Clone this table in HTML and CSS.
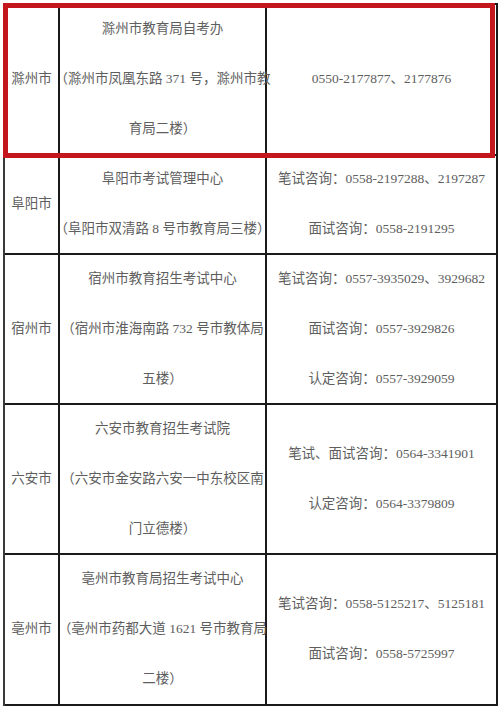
FILE: index.html
```html
<!DOCTYPE html>
<html lang="zh">
<head>
<meta charset="utf-8">
<title>考试咨询电话</title>
<link rel="stylesheet" href="styles.css">
</head>
<body>
<div class="sheet">
  <div class="grid">
    <div class="cell city"><div class="lines"><span>滁州市</span></div></div>
    <div class="cell"><div class="lines"><span>滁州市教育局自考办</span><span>（滁州市凤凰东路 371 号，滁州市教</span><span>育局二楼）</span></div></div>
    <div class="cell last"><div class="lines"><span>0550-2177877、2177876</span></div></div>

    <div class="cell city"><div class="lines"><span>阜阳市</span></div></div>
    <div class="cell"><div class="lines"><span>阜阳市考试管理中心</span><span>（阜阳市双清路 8 号市教育局三楼）</span></div></div>
    <div class="cell last"><div class="lines"><span>笔试咨询：0558-2197288、2197287</span><span>面试咨询：0558-2191295</span></div></div>

    <div class="cell city"><div class="lines"><span>宿州市</span></div></div>
    <div class="cell"><div class="lines"><span>宿州市教育招生考试中心</span><span>（宿州市淮海南路 732 号市教体局</span><span>五楼）</span></div></div>
    <div class="cell last"><div class="lines"><span>笔试咨询：0557-3935029、3929682</span><span>面试咨询：0557-3929826</span><span>认定咨询：0557-3929059</span></div></div>

    <div class="cell city"><div class="lines"><span>六安市</span></div></div>
    <div class="cell"><div class="lines"><span>六安市教育招生考试院</span><span>（六安市金安路六安一中东校区南</span><span>门立德楼）</span></div></div>
    <div class="cell last"><div class="lines"><span>笔试、面试咨询：0564-3341901</span><span>认定咨询：0564-3379809</span></div></div>

    <div class="cell city"><div class="lines"><span>亳州市</span></div></div>
    <div class="cell"><div class="lines"><span>亳州市教育局招生考试中心</span><span>（亳州市药都大道 1621 号市教育局</span><span>二楼）</span></div></div>
    <div class="cell last"><div class="lines"><span>笔试咨询：0558-5125217、5125181</span><span>面试咨询：0558-5725997</span></div></div>
  </div>
  <div class="highlight"></div>
</div>
</body>
</html>
```

FILE: styles.css
```css
html, body {
  margin: 0;
  padding: 0;
  background: #ffffff;
}

.sheet {
  position: relative;
  margin: 3px;
  width: 495px;
}

.grid {
  display: grid;
  grid-template-columns: 55px 207px 231px;
  grid-template-rows: 151px 99px 150px 150px 151px;
  border-left: 2px solid #3a3a3a;
  border-top: 2px solid #1a1a1a;
  font-family: "Liberation Serif", "Noto Sans CJK SC", serif;
  font-size: 13.5px;
  color: #5e5e5e;
}

.cell {
  border-right: 2px solid #1a1a1a;
  border-bottom: 2px solid #1a1a1a;
  display: flex;
  align-items: center;
  justify-content: center;
  min-width: 0;
}

.lines {
  display: flex;
  flex-direction: column;
  align-items: center;
  line-height: 50px;
  white-space: nowrap;
  margin-top: -1px;
}

.highlight {
  position: absolute;
  left: 0;
  top: 0;
  width: 492px;
  height: 155px;
  box-sizing: border-box;
  border: 5px solid #c4171d;
  pointer-events: none;
}
```
